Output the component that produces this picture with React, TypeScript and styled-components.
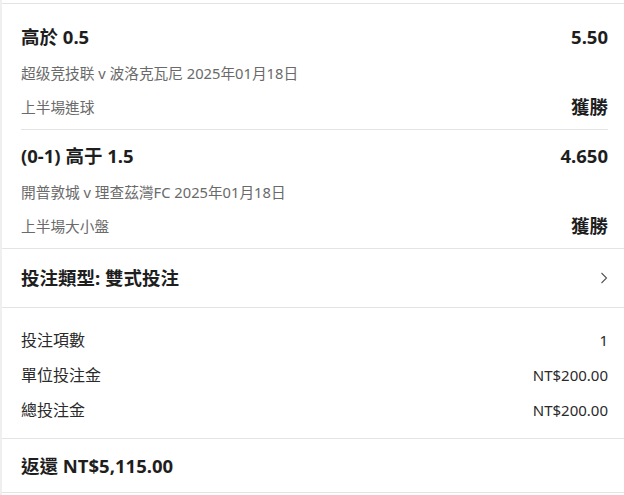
import React from "react";
import styled, { createGlobalStyle } from "styled-components";

const Global = createGlobalStyle`
  html, body { margin: 0; padding: 0; background: #ffffff; }
  body {
    font-family: "Noto Sans", "Noto Sans CJK TC", sans-serif;
    color: #1f1f1f;
    -webkit-font-smoothing: antialiased;
  }
`;

const Page = styled.div`
  width: 624px;
  height: 495px;
  box-sizing: border-box;
  border-left: 2px solid #efefef;
  padding-top: 3px;
  overflow: hidden;
`;

const Card = styled.div`
  border-top: 1px solid #e4e4e4;
  border-bottom: 1px solid #e4e4e4;
  background: #fff;
`;

const Section = styled.div<{ $pt?: number; $pb?: number }>`
  padding: ${(p) => p.$pt ?? 0}px 16px ${(p) => p.$pb ?? 0}px 19px;
  & + & { border-top: 1px solid #e4e4e4; }
`;

const BetList = styled(Section)`
  display: flex;
  flex-direction: column;
`;

const Bet = styled.div`
  padding: 14px 0 10px;
  display: flex;
  flex-direction: column;
  & + & { border-top: 1px solid #e4e4e4; }
`;

const Row = styled.div<{ $h?: number }>`
  display: flex;
  justify-content: space-between;
  align-items: center;
  height: ${(p) => p.$h ?? 24}px;
`;

const Title = styled.span`
  font-size: 18.5px;
  font-weight: 700;
  color: #1e1e1e;
  line-height: 24px;
`;

const Sub = styled.span`
  font-size: 14.7px;
  color: #6a6a6a;
  line-height: 20px;
`;

const SubRow = styled(Row)`
  margin-top: 14px;
`;

const MarketRow = styled(Row)`
  margin-top: 12px;
`;

const TypeRow = styled.div`
  display: flex;
  justify-content: space-between;
  align-items: center;
  height: 58px;
`;

const SummaryList = styled(Section)`
  display: flex;
  flex-direction: column;
  gap: 11px;
`;

const Label = styled.span`
  font-size: 16px;
  color: #2a2a2a;
  line-height: 24px;
`;

const Value = styled.span`
  font-size: 15px;
  color: #2a2a2a;
  line-height: 24px;
`;

const ReturnRow = styled.div`
  display: flex;
  align-items: center;
  height: 53px;
`;

const Chevron = () => (
  <svg width="8" height="12" viewBox="0 0 8 12">
    <polyline points="1.5,1 6.5,6 1.5,11" fill="none" stroke="#555" strokeWidth="1.1" />
  </svg>
);

const bets = [
  { title: "高於 0.5", odds: "5.50", match: "超级竞技联 v 波洛克瓦尼 2025年01月18日", market: "上半場進球" },
  { title: "(0-1) 高于 1.5", odds: "4.650", match: "開普敦城 v 理查茲灣FC 2025年01月18日", market: "上半場大小盤" },
];

const summary = [
  { label: "投注項數", value: "1" },
  { label: "單位投注金", value: "NT$200.00" },
  { label: "總投注金", value: "NT$200.00" },
];

export default function App() {
  return (
    <>
      <Global />
      <Page>
        <Card>
          <BetList $pt={7}>
            {bets.map((b) => (
              <Bet key={b.title}>
                <Row>
                  <Title>{b.title}</Title>
                  <Title>{b.odds}</Title>
                </Row>
                <SubRow $h={20}>
                  <Sub>{b.match}</Sub>
                </SubRow>
                <MarketRow>
                  <Sub>{b.market}</Sub>
                  <Title>獲勝</Title>
                </MarketRow>
              </Bet>
            ))}
          </BetList>
          <Section>
            <TypeRow>
              <Title>投注類型: 雙式投注</Title>
              <Chevron />
            </TypeRow>
          </Section>
          <SummaryList $pt={20} $pb={16}>
            {summary.map((s) => (
              <Row key={s.label}>
                <Label>{s.label}</Label>
                <Value>{s.value}</Value>
              </Row>
            ))}
          </SummaryList>
          <Section>
            <ReturnRow>
              <Title>返還 NT$5,115.00</Title>
            </ReturnRow>
          </Section>
        </Card>
      </Page>
    </>
  );
}
